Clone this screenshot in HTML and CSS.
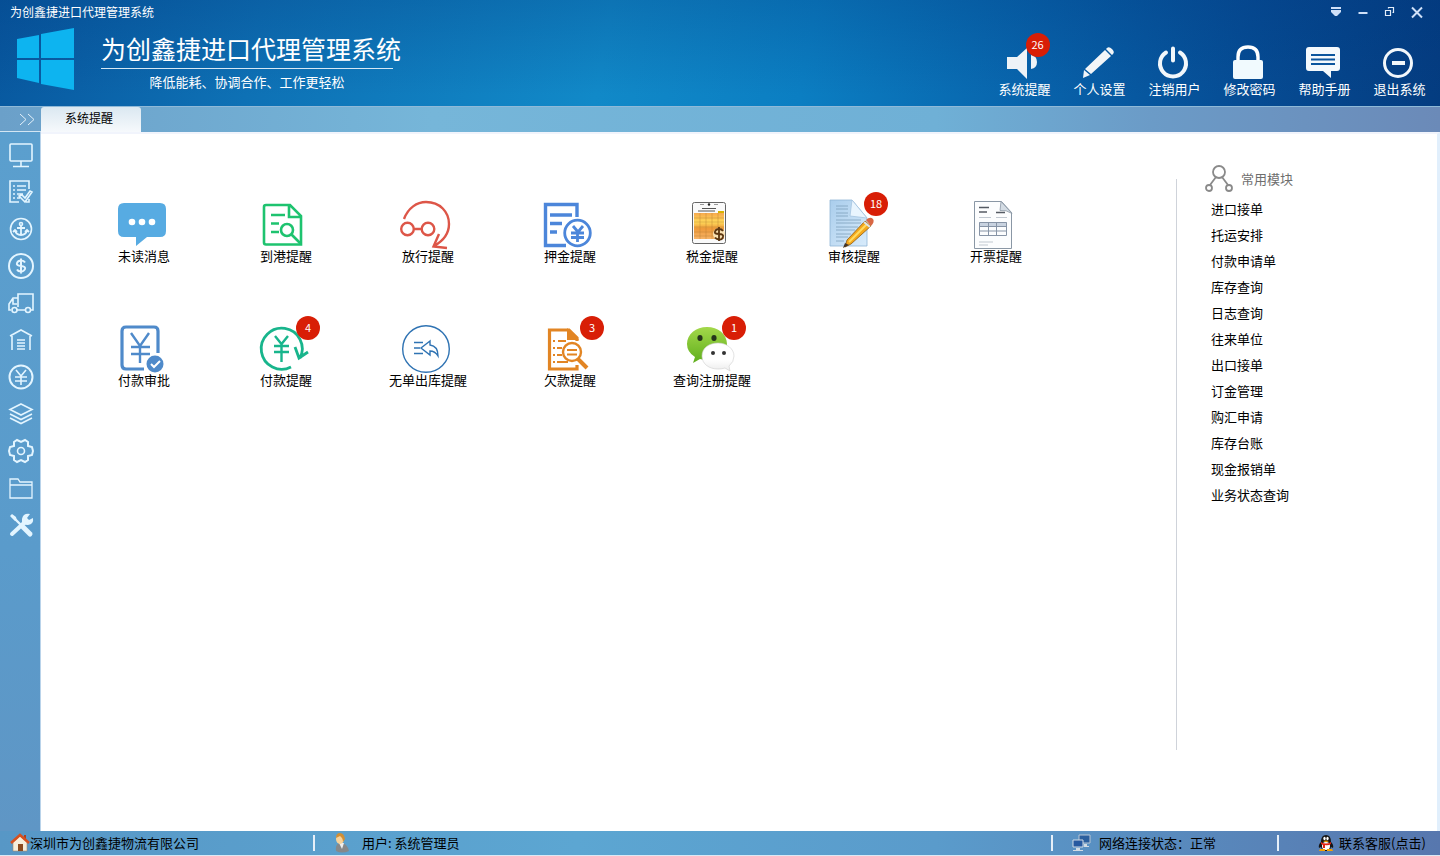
FILE: index.html
```html
<!DOCTYPE html>
<html lang="zh-CN">
<head>
  <meta charset="UTF-8">
  <meta name="viewport" content="width=device-width, initial-scale=1.0">
  <title>为创鑫捷进口代理管理系统</title>
  <link rel="stylesheet" href="styles.css">
</head>
<body>
  <header class="header">
    <div class="titlebar">
      <span>为创鑫捷进口代理管理系统</span>
      <div class="window-buttons">
        <button type="button" aria-label="菜单"><svg width="14" height="14" viewBox="0 0 14 14" fill="#cfe0f8"><path d="M2 2h10v2H2zM2 5h10v2l-4 4H6L2 7z"/></svg></button>
        <button type="button" aria-label="最小化"><svg width="14" height="14" viewBox="0 0 14 14"><path d="M2.500 8h9" stroke="#cfe0f8" stroke-width="2"/></svg></button>
        <button type="button" aria-label="还原"><svg width="14" height="14" viewBox="0 0 14 14"><path d="M2.500 5.500h5v5h-5zM5.500 3.500v-1h5v5h-1" fill="none" stroke="#e4eefb" stroke-width="1.200"/></svg></button>
        <button type="button" aria-label="关闭"><svg width="14" height="14" viewBox="0 0 14 14"><path d="M2 2.500l10 10M12 2.500l-10 10" stroke="#cfe0f8" stroke-width="2"/></svg></button>
      </div>
    </div>
    <div class="banner">
      <svg class="logo" width="58" height="62" viewBox="0 0 58 62" fill="#0db4f0"><path d="M0 11L22 7v23H0zM24 6L57 0v30H24zM0 32h22v23L0 50zM24 32h33v30l-33-6z"/></svg>
      <div class="brand">
        <h1>为创鑫捷进口代理管理系统</h1>
        <p>降低能耗、协调合作、工作更轻松</p>
      </div>
      <nav class="tools">
        <button type="button">
          <svg width="36" height="36" viewBox="0 0 36 36" fill="#eef3f7"><path d="M2 12h10l10-9v31L12 24H2zM26 10q6 1 6 7t-6 7z"/></svg>
          <span>系统提醒</span>
          <b class="badge">26</b>
        </button>
        <button type="button">
          <svg width="36" height="36" viewBox="0 0 36 36" fill="#f2f5f8"><path d="M27 3q2-2 5 1t1 5l-1 1-6-6zM25 5l6 6L11 29l-6-5zM4 25l6 5-7 3z"/></svg>
          <span>个人设置</span>
        </button>
        <button type="button">
          <svg width="36" height="36" viewBox="0 0 36 36" fill="none" stroke="#f2f7fb" stroke-width="4" stroke-linecap="round"><path d="M18 3.500v12M11 7.500a13 13 0 1 0 14 0"/></svg>
          <span>注销用户</span>
        </button>
        <button type="button">
          <svg width="36" height="36" viewBox="0 0 36 36"><path d="M8 17v-5q0-10 10-10t10 10v5" fill="none" stroke="#fff" stroke-width="3.400"/><rect x="3" y="15" width="30" height="19" rx="2" fill="#f1fafe"/></svg>
          <span>修改密码</span>
        </button>
        <button type="button">
          <svg width="36" height="36" viewBox="0 0 36 36"><path d="M4 2h28q3 0 3 3v18q0 3-3 3h-6v7l-8-7H4q-3 0-3-3V5q0-3 3-3z" fill="#f4f9fd"/><path d="M6 10h24M6 14.500h24M6 19h24" stroke="#0b559e" stroke-width="2"/></svg>
          <span>帮助手册</span>
        </button>
        <button type="button">
          <svg width="36" height="36" viewBox="0 0 36 36" fill="none" stroke="#f2f7fb"><circle cx="18" cy="18" r="13.500" stroke-width="3"/><path d="M12 18h13" stroke-width="4"/></svg>
          <span>退出系统</span>
        </button>
      </nav>
    </div>
  </header>

  <div class="tabbar">
    <button type="button" class="expand" aria-label="展开"><svg width="16" height="13" viewBox="0 0 16 13" fill="none" stroke="#e3f1fb"><path d="M1 1l6 5.500L1 12M9 1l6 5.500L9 12"/></svg></button>
    <button type="button" class="tab">系统提醒</button>
  </div>

  <div class="workspace">
    <nav class="sidebar">
      <a href="#" aria-label="桌面"><svg viewBox="0 0 26 26"><rect x="2" y="2" width="22" height="17" rx="1"/><path d="M13 19v5M5 24.500h16"/></svg></a>
      <a href="#" aria-label="单据"><svg viewBox="0 0 26 26"><path d="M21 10V2H2v21h9M9 7h9M9 11h9M9 15h6M9 19h3M5 7h2M5 11h2M5 15h2M5 19h2M11 17l6 6 7-10-2-1-5 7-3-3zM21 20v3h-3"/></svg></a>
      <a href="#" aria-label="港口"><svg viewBox="0 0 26 26"><circle cx="13" cy="13" r="10.500"/><circle cx="13" cy="8" r="1.500"/><path d="M13 10v9M9 12h8M7 14q1 5 6 5t6-5M5 16l2-2 2 2M21 16l-2-2-2 2" stroke-width="1.800"/></svg></a>
      <a href="#" aria-label="财务"><svg viewBox="0 0 26 26"><circle cx="13" cy="13" r="12" stroke-width="2"/><path d="M17 9.500Q16 7.500 13 7.500T9 10t4 3 4 3-4 2.500-4-2M13 5.500v15" stroke-width="2"/></svg></a>
      <a href="#" aria-label="运输"><svg viewBox="0 0 26 26"><path d="M10 17V4h15v16h-3M9 20h8M10 8H5l-4 6v6h2M5 9v5h4"/><circle cx="6.500" cy="20" r="2.500"/><circle cx="20" cy="20" r="2.500"/></svg></a>
      <a href="#" aria-label="仓库"><svg viewBox="0 0 26 26"><path d="M2 9l11-6 11 6M4 9v14M22 9v14M9 13h8M9 16h8M9 19h8M9 22h8"/></svg></a>
      <a href="#" aria-label="结算"><svg viewBox="0 0 26 26"><circle cx="13" cy="13" r="11.500" stroke-width="2"/><path d="M8 6l5 6 5-6M7 13h12M7 17h12M13 12v9"/></svg></a>
      <a href="#" aria-label="报表"><svg viewBox="0 0 26 26"><path d="M13 3l11 5.500L13 14 2 8.500zM2 13l11 5.500L24 13M2 17l11 5.500L24 17"/></svg></a>
      <a href="#" aria-label="设置"><svg viewBox="0 0 26 26"><path d="M9 2l4 2 4-2 3 2v4l4 1 1 4-1 4-4 1v4l-3 2-4-2-4 2-3-2v-4l-4-1-1-4 1-4 4-1V4z" stroke-width="2"/><circle cx="13" cy="13" r="3.500"/></svg></a>
      <a href="#" aria-label="文件"><svg viewBox="0 0 26 26"><path d="M2 23V4h8l2 3h12v16zM2 10h22" stroke-width="1.300"/></svg></a>
      <a href="#" aria-label="工具"><svg viewBox="0 0 26 26"><path d="M4 4l10 10" stroke-width="2.400"/><path d="M2 4l2-2 4 3 1 4-2 0z" fill="#e3f5ff" stroke="none"/><path d="M15 15l7 7" stroke-width="5" stroke-linecap="round"/><path d="M4 22L17 10" stroke-width="4" stroke-linecap="round"/><path d="M22 2l-3 4 2 2 4-2q1 6-5 7-7 0-6-6 1-6 8-5z" fill="#e3f5ff" stroke="none"/></svg></a>
    </nav>

    <main class="content">
      <div class="modules">
        <a href="#" class="module">
          <svg viewBox="0 0 48 48"><path d="M6 3h36q6 0 6 6v22q0 6-6 6H29l-11 9v-9H6q-6 0-6-6V9q0-6 6-6z" fill="#57abe2"/><g fill="#fff"><circle cx="14" cy="22" r="3.300"/><circle cx="24" cy="22" r="3.300"/><circle cx="34" cy="22" r="3.300"/></g></svg>
          <span>未读消息</span>
        </a>
        <a href="#" class="module">
          <svg viewBox="0 0 48 48" fill="none" stroke="#1ec36f" stroke-width="2.600"><path d="M41 35v9.500H6q-2 0-2-2V7q0-2 2-2h24l11 11v24M29 5v12h12M11 15h14M11 23.500h8M11 32h8"/><circle cx="27" cy="30" r="6"/><path d="M31.500 34.500L41 44"/></svg>
          <span>到港提醒</span>
        </a>
        <a href="#" class="module">
          <svg viewBox="0 0 48 48" fill="none" stroke="#dd5648" stroke-width="2.400"><path d="M2 19C6 8 15 2 24 2c14 0 23 10 23 22 0 10-6 17-15 22M37 34l-5.500 12.500L45 48M12 29h8"/><circle cx="5.500" cy="29" r="6.300"/><circle cx="26" cy="29" r="6.300"/></svg>
          <span>放行提醒</span>
        </a>
        <a href="#" class="module">
          <svg viewBox="0 0 48 48" fill="none" stroke="#4c86da" stroke-width="3.400"><path d="M33 17V4.500H1.500v41H22M6 15h22M6 23.500h12M6 32h7"/><circle cx="33.500" cy="33" r="12.800" stroke-width="2.800"/><path d="M29 26l5 6 5-6M27 33h13M27 37.500h13M33.500 32v10" stroke-width="2.800"/></svg>
          <span>押金提醒</span>
        </a>
        <a href="#" class="module">
          <svg viewBox="0 0 48 48">
            <defs><linearGradient id="sheet" x1="0" y1="0" x2="0" y2="1"><stop offset="0" stop-color="#f6a94e"/><stop offset=".35" stop-color="#ffd95a"/><stop offset=".6" stop-color="#ee9a3a"/><stop offset="1" stop-color="#f7b468"/></linearGradient></defs>
            <rect x="6.500" y="2.500" width="33" height="41" rx="2" fill="#fafafa" stroke="#666"/>
            <path d="M14 4.500h4M28 4.500h4" stroke="#999"/><circle cx="23" cy="4.500" r="1.200" fill="#222"/>
            <path d="M16 8.500h14M12 11h17" stroke="#555"/><path d="M32 12h6" stroke="#d8b400" stroke-width="2"/>
            <rect x="8" y="13" width="30" height="26" fill="url(#sheet)"/>
            <path d="M8 18h30M8 22h30M8 27h30M8 32h30M8 36h30M14 13v26M20 13v26M26 13v26M32 13v26" stroke="#b9782e" stroke-width=".4"/>
            <circle cx="33" cy="34" r="6" fill="#fae2b4"/>
            <path d="M37 31q-1-2-4-2t-4 2.500 4 2.500 4 3-4 2.500-4-2M33 27v14" fill="none" stroke="#5b3510" stroke-width="1.800"/>
          </svg>
          <span>税金提醒</span>
        </a>
        <a href="#" class="module">
          <svg viewBox="0 0 48 48">
            <defs><linearGradient id="paper" x1="0" y1="0" x2="1" y2="1"><stop offset="0" stop-color="#a9cdec"/><stop offset="1" stop-color="#d8ebfb"/></linearGradient></defs>
            <path d="M2 0h22l15 18v28H2z" fill="url(#paper)" stroke="#90b5d6" stroke-width=".8"/>
            <path d="M24 0l-2 16 17 2z" fill="#e9f5fe" stroke="#a5c4df" stroke-width=".8"/>
            <path d="M8 6h12M8 9h12M8 13h12M8 16h12M8 20h25M8 23h25M8 27h22M8 30h19M8 34h15M8 37h12M8 41h8" stroke="#7fa1bd" stroke-width=".8"/>
            <path d="M37 21l6 5-20 18-6 3 2-7z" fill="#f5a81c" stroke="#8f5a10" stroke-width=".8"/>
            <path d="M39 24L21 42" stroke="#ffdc62" stroke-width="2"/>
            <path d="M38 20q4-4 7-1 2 3-2 7z" fill="#d96744"/><path d="M36 22l6 5" stroke="#dce2e8" stroke-width="2"/><path d="M17 43l4 2-6 3z" fill="#42352a"/>
          </svg>
          <span>审核提醒</span>
          <b class="badge">18</b>
        </a>
        <a href="#" class="module">
          <svg viewBox="0 0 48 48">
            <path d="M4.500 1.500h27l10 11v36h-37z" fill="#fcfdfe" stroke="#8a97a5"/>
            <path d="M31 1.500l-1 9q6-1 12 3z" fill="#d4dce4" stroke="#8a97a5" stroke-width=".8"/>
            <path d="M9 7.500h10M9 12h8M26 12.500h9" stroke="#555b64" stroke-width="1.500"/>
            <path d="M9 17.500h12M26 17.500h11M9 42h14M9 45h9" stroke="#c1c8d0" stroke-width="1"/>
            <path d="M9 22h28v4H9z" fill="#c9d3e0"/><path d="M9.500 22.500h27v13h-27zM9 26.500h28M9 31h28M18.500 22v14M26.500 22v14" fill="none" stroke="#8794a6"/>
          </svg>
          <span>开票提醒</span>
        </a>
        <a href="#" class="module">
          <svg viewBox="0 0 48 48" fill="none" stroke="#4f8aca" stroke-width="3.200"><path d="M26 45H8q-4 0-4-4V7q0-4 4-4h28q4 0 4 4v22"/><path d="M13 9l9 13 9-13M13 23h19M13 30h19M22 22v17" stroke-width="2.400"/><circle cx="37" cy="40" r="8.500" fill="#4f8aca" stroke="none"/><path d="M33 40l3 3 6-6" stroke="#fff" stroke-width="2"/></svg>
          <span>付款审批</span>
        </a>
        <a href="#" class="module">
          <svg viewBox="0 0 48 48" fill="none" stroke="#18b58c" stroke-width="2.800"><path d="M31 43A20.500 20.500 0 1 1 40 34M35 23l4 11 9-6"/><path d="M15 12l6.500 8 6.500-8M14 22h15M14 28h15M21.500 20v18" stroke-width="2.400"/></svg>
          <span>付款提醒</span>
          <b class="badge">4</b>
        </a>
        <a href="#" class="module">
          <svg viewBox="0 0 48 48" fill="none" stroke="#2f73b3" stroke-width="1.400"><circle cx="24" cy="25" r="23.300"/><path d="M12 18.500h9M12 24h6M12 29.500h9"/><path d="M28 17l-9 7 9 7v-4q5 0 8 5 0-10-8-11z"/></svg>
          <span>无单出库提醒</span>
        </a>
        <a href="#" class="module">
          <svg viewBox="0 0 48 48" fill="none" stroke="#e28524" stroke-width="3.200"><path d="M33 17v-3l-8-8H5.500v39H33v-4"/><path d="M23 4l12 12H23z" fill="#e28524" stroke="none"/><path d="M14 17h8M13 24h5M13 31h5M13 38h11" stroke-width="2"/><path d="M9 17h2M9 24h2M9 31h2M9 38h2" stroke-width="2"/><circle cx="28" cy="28" r="9" fill="#fff" stroke-width="2.400"/><path d="M23 26h10M23 30.500h10" stroke-width="2"/><path d="M34 35l9 9" stroke-width="4"/></svg>
          <span>欠款提醒</span>
          <b class="badge">3</b>
        </a>
        <a href="#" class="module">
          <svg viewBox="0 0 48 48">
            <defs>
              <linearGradient id="green" x1="0" y1="0" x2="0" y2="1"><stop offset="0" stop-color="#a3d84a"/><stop offset="1" stop-color="#5fae1c"/></linearGradient>
              <linearGradient id="white" x1="0" y1="0" x2="0" y2="1"><stop offset=".6" stop-color="#fff"/><stop offset="1" stop-color="#ececec"/></linearGradient>
            </defs>
            <path d="M21 3c11 0 20 7 20 17s-9 16-20 16q-4 0-7-1l-7 4 2-6Q1 28 1 20C1 10 10 3 21 3z" fill="url(#green)"/>
            <ellipse cx="14" cy="14" rx="2.600" ry="3" fill="#26351b"/><ellipse cx="28" cy="14" rx="2.600" ry="3" fill="#26351b"/>
            <path d="M32 19c9 0 16 6 16 13q0 6-5 10l1 5-5-3q-3 1-7 1c-9 0-16-5-16-13s7-13 16-13z" fill="url(#white)" stroke="#cfcfcf" stroke-width=".6"/>
            <circle cx="27" cy="29" r="2" fill="#333"/><circle cx="38" cy="29" r="2" fill="#333"/>
          </svg>
          <span>查询注册提醒</span>
          <b class="badge">1</b>
        </a>
      </div>

      <aside class="common">
        <h2><svg width="28" height="28" viewBox="0 0 28 28" fill="none" stroke="#8a8a8a" stroke-width="1.800"><circle cx="14" cy="7" r="6"/><circle cx="4" cy="23" r="3"/><circle cx="24" cy="23" r="3"/><path d="M11 12l-6 8M17 12l6 8"/></svg>常用模块</h2>
        <ul>
          <li><a href="#">进口接单</a></li>
          <li><a href="#">托运安排</a></li>
          <li><a href="#">付款申请单</a></li>
          <li><a href="#">库存查询</a></li>
          <li><a href="#">日志查询</a></li>
          <li><a href="#">往来单位</a></li>
          <li><a href="#">出口接单</a></li>
          <li><a href="#">订金管理</a></li>
          <li><a href="#">购汇申请</a></li>
          <li><a href="#">库存台账</a></li>
          <li><a href="#">现金报销单</a></li>
          <li><a href="#">业务状态查询</a></li>
        </ul>
      </aside>
    </main>
  </div>

  <footer class="statusbar">
    <div class="company"><svg width="20" height="20" viewBox="0 0 20 20"><path d="M3 9v9h14V9l-7-6z" fill="#f7eedb" stroke="#a98b68" stroke-width=".6"/><path d="M8 11h5v7H8z" fill="#8c4a1d"/><path d="M14 2h2v5h-2z" fill="#b3401c"/><path d="M1 10l9-8 9 8" fill="none" stroke="#d5501f" stroke-width="2.600"/></svg>深圳市为创鑫捷物流有限公司</div>
    <div class="user"><svg width="20" height="20" viewBox="0 0 20 20"><path d="M4 18q-1-8 5-8t8 8q-7 3-13 0z" fill="#85888a"/><path d="M7 10l3 6 2-6z" fill="#eee"/><ellipse cx="8" cy="6" rx="4" ry="5" fill="#f7d29a"/><path d="M4 5q0-5 4-5t5 6l-2 3q0-4-3-6z" fill="#d08f35"/></svg>用户: 系统管理员</div>
    <div class="network"><svg width="20" height="20" viewBox="0 0 20 20"><path d="M8 2h11v8H8z" fill="#2b5f9e" stroke="#b9c6d4"/><path d="M2 7h10v7H2z" fill="#2759a0" stroke="#d0dae4"/><path d="M5 15h4v2h3v1H2v-1h3zM13 11h3v2h2v1h-5z" fill="#d2dbe4"/></svg>网络连接状态：正常</div>
    <a href="#" class="service"><svg width="18" height="18" viewBox="0 0 18 18"><path d="M4 8q0-7 5-7t5 7q3 3 2 6l-2-1q-1 4-5 4t-5-4l-2 1q-1-3 2-6z" fill="#161616"/><ellipse cx="9" cy="12" rx="4" ry="4" fill="#fff"/><ellipse cx="7.500" cy="4.500" rx="1.200" ry="1.800" fill="#fff"/><ellipse cx="10.500" cy="4.500" rx="1.200" ry="1.800" fill="#fff"/><path d="M6 7q3-1 6 0-3 2-6 0zM3 15h5v2H2zM10 15h5l1 2h-6z" fill="#f5a000"/><path d="M4 8q5 3 10 0v2q-3 2-6 1v3H6v-3l-2-1z" fill="#df2416"/></svg>联系客服(点击)</a>
  </footer>
</body>
</html>
```
FILE: styles.css
```css
* {
  box-sizing: border-box;
}

body {
  margin: 0;
  min-height: 100vh;
  display: flex;
  flex-direction: column;
  font-family: "Noto Sans CJK SC", sans-serif;
  font-size: 13px;
  line-height: 16px;
  color: #000;
  background: #5b9bc9;
}

button {
  padding: 0;
  border: none;
  background: none;
  font: inherit;
  color: inherit;
  cursor: pointer;
}

a {
  color: inherit;
  text-decoration: none;
}

svg {
  display: block;
  flex-shrink: 0;
}

/* 顶部 */
.header {
  height: 106px;
  color: #fff;
  background:
    linear-gradient(to bottom, rgba(0, 50, 120, 0.25), rgba(0, 50, 120, 0) 90%),
    linear-gradient(100deg, #08589f 0%, #0e71b5 18%, #1189c8 42%, #0b7ec2 56%, #0863ab 72%, #064d95 86%, #043c80 100%);
}

.titlebar {
  height: 24px;
  display: flex;
  justify-content: space-between;
  align-items: center;
  padding: 0 10px;
  font-size: 12px;
}

.window-buttons {
  display: flex;
}

.window-buttons button {
  width: 27px;
  display: flex;
  justify-content: center;
}

.banner {
  display: flex;
  align-items: flex-start;
  padding: 0 3px 0 17px;
}

.logo {
  margin-top: 4px;
}

.brand {
  margin: 7px 0 0 26px;
}

.brand h1 {
  margin: 0;
  padding-bottom: 3px;
  font-size: 25px;
  line-height: 34px;
  font-weight: 400;
  white-space: nowrap;
}

.brand p {
  margin: 0 8px 0 0;
  padding-top: 5px;
  border-top: 1px solid #d5e8f5;
  text-align: center;
}

.tools {
  margin-left: auto;
  padding-top: 21px;
  display: flex;
}

.tools button {
  position: relative;
  width: 75px;
  display: flex;
  flex-direction: column;
  align-items: center;
}

.tools svg {
  margin-right: 4px;
}

.badge {
  position: absolute;
  top: -8px;
  left: 50%;
  margin-left: 10px;
  width: 24px;
  height: 24px;
  border-radius: 50%;
  background: #d81e06;
  color: #fff;
  font-size: 11px;
  font-weight: 400;
  line-height: 22px;
  text-align: center;
}

.tools .badge {
  top: -12px;
  margin-left: 1px;
}

/* 标签栏 */
.tabbar {
  height: 26px;
  display: flex;
  border-top: 1px solid #8fb9d8;
  background: linear-gradient(to right, #6ba0c9, #76b6d9 30%, #6fb0d6 65%, #6b9bc7 80%, #6b8ab8);
}

.expand {
  width: 41px;
  padding-right: 6px;
  display: flex;
  justify-content: flex-end;
  align-items: center;
  border-bottom: 1px solid #d3e6f3;
}

.tab {
  width: 100px;
  padding: 0 4px 3px 0;
  border-radius: 3px 3px 0 0;
  background: linear-gradient(#dbe8f1, #f6f9fc);
  font-size: 12px;
}

/* 主体 */
.workspace {
  flex: 1;
  display: flex;
}

.sidebar {
  width: 41px;
  padding: 10px 0 0 8px;
  display: flex;
  flex-direction: column;
  gap: 11px;
  border-right: 1px solid #b9d3ea;
  background: linear-gradient(#5b9fce, #5a9bcb 60%, #5f96c5);
}

.sidebar svg {
  width: 26px;
  height: 26px;
  fill: none;
  stroke: #e3f5ff;
  stroke-width: 1.6;
}

.content {
  flex: 1;
  display: flex;
  border-right: 3px solid #e1effc;
  border-top: 2px solid #f1f4fc;
  background: #fff;
}

.modules {
  flex: 1;
  padding: 66px 0 0 32px;
  display: grid;
  grid-template-columns: repeat(auto-fill, 142px);
  grid-auto-rows: 68px;
  row-gap: 56px;
  align-content: start;
}

.module {
  position: relative;
  display: flex;
  flex-direction: column;
  align-items: center;
}

.module svg {
  width: 48px;
  height: 48px;
  margin-right: 4px;
  overflow: visible;
}

.common {
  width: 261px;
  margin: 45px 0 81px;
  padding-left: 28px;
  border-left: 1px solid #cfd3da;
}

.common h2 {
  margin: -16px 0 0;
  height: 32px;
  display: flex;
  align-items: center;
  gap: 8px;
  font-size: 13px;
  font-weight: 400;
  color: #6e6e6e;
}

.common ul {
  margin: 1px 0 0 6px;
  padding: 0;
  list-style: none;
}

.common li {
  line-height: 26px;
}

/* 状态栏 */
.statusbar {
  height: 25px;
  display: flex;
  align-items: center;
  border-bottom: 1px solid #dbe9f5;
  background: linear-gradient(to right, #5797c6, #5ca6d2 40%, #5a9bcb 65%, #5777ae);
}

.statusbar > * {
  display: flex;
  align-items: center;
}

.statusbar > * + * {
  border-left: 2px solid #e6eff8;
  height: 16px;
}

.company {
  width: 313px;
  padding-left: 10px;
}

.user {
  flex: 1;
  padding-left: 17px;
  gap: 10px;
}

.network {
  width: 226px;
  padding-left: 18px;
  gap: 8px;
}

.service {
  width: 163px;
  padding-left: 38px;
  gap: 4px;
}
```
